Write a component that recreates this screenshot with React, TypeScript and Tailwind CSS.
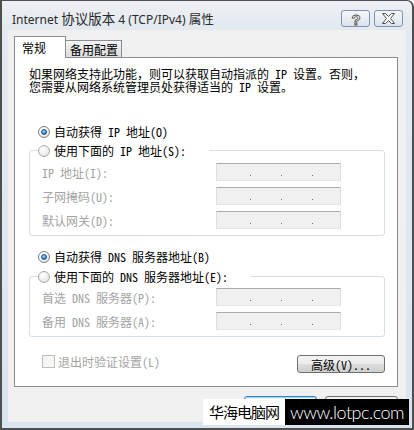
import React from "react";

function Radio({ checked }: { checked?: boolean }) {
  return (
    <span
      className={
        "flex h-[12px] w-[12px] shrink-0 items-center justify-center rounded-full border " +
        (checked
          ? "border-[#7f7f7f] bg-[radial-gradient(circle_at_35%_30%,#ffffff_0%,#f2f2f2_55%,#d4d4d4_100%)]"
          : "border-[#a9a9a9] bg-[radial-gradient(circle_at_35%_30%,#ffffff_0%,#eeeeee_55%,#d9d9d9_100%)]")
      }
    >
      {checked && (
        <span className="h-[6px] w-[6px] rounded-full border border-[#1d5595] bg-[radial-gradient(circle_at_40%_35%,#b4e2fa_0%,#4a9ce0_45%,#1b60ab_100%)]" />
      )}
    </span>
  );
}

function IpBox() {
  return (
    <div className="flex h-[18px] w-[125px] items-end gap-[30px] border border-b-[#e3e7ec] border-l-[#dadee4] border-r-[#dadee4] border-t-[#a7a9ad] bg-[#f0f0f0] pb-[4px] pl-[33px]">
      <span className="h-px w-px bg-[#6a6a6a]" />
      <span className="h-px w-px bg-[#6a6a6a]" />
      <span className="h-px w-px bg-[#6a6a6a]" />
    </div>
  );
}

function Row({ label }: { label: string }) {
  return (
    <div className="flex h-[18px] items-center">
      <div className="w-[174px] whitespace-pre text-[#a3a3a3]">{label}</div>
      <IpBox />
    </div>
  );
}

function Group({
  legend,
  legendWidth,
  rows,
  pt,
}: {
  legend: string;
  legendWidth: string;
  rows: string[];
  pt: string;
}) {
  return (
    <fieldset className="rounded-[3px] border border-[#d5dfe5] p-0">
      <legend className={"ml-[8px] flex h-[13px] items-center gap-[4px] " + legendWidth}>
        <Radio />
        <span className="whitespace-pre">{legend}</span>
      </legend>
      <div className={"flex flex-col gap-[6px] pb-[6px] pl-[12px] " + pt}>
        {rows.map((r) => (
          <Row key={r} label={r} />
        ))}
      </div>
    </fieldset>
  );
}

function TitleButton({ children }: { children: React.ReactNode }) {
  return (
    <div className="flex h-[17px] w-[29px] items-center justify-center rounded-[3px] border border-[#8193ab] bg-[linear-gradient(180deg,#f5f7fa_0%,#e9edf3_50%,#dde3ec_100%)]">
      {children}
    </div>
  );
}

export default function App() {
  return (
    <div className="relative h-[430px] w-[414px] overflow-hidden bg-white">
      <div className="flex h-[430px] w-[414px] flex-col rounded-tr-[7px] border-b-2 border-l-2 border-r-2 border-t border-[#4f4f4f] bg-[linear-gradient(180deg,#edf0f4_0px,#e3e9f0_30px,#d9e4f1_100%)]">
        {/* title bar */}
        <div className="flex h-[29px] shrink-0 items-start pl-[10px] pr-[9px]">
          <div className="mt-[10px] whitespace-pre font-['Noto_Sans','Noto_Sans_CJK_SC',sans-serif] text-[12px] leading-[16px] text-[#2a2a2a]">
            Internet <span className="text-[13.5px]">协议版本</span> 4 (TCP/IPv4) <span className="text-[12.5px]">属性</span>
          </div>
          <div className="ml-auto mt-[9px] flex gap-[4px]">
            <TitleButton>
              <svg width="14" height="14" viewBox="0 0 14 14">
                <text
                  x="7"
                  y="12.5"
                  textAnchor="middle"
                  fontSize="15"
                  fontWeight="700"
                  fontFamily="Liberation Sans, sans-serif"
                  fill="#ffffff"
                  stroke="#4a4a4a"
                  strokeWidth="0.8"
                >
                  ?
                </text>
              </svg>
            </TitleButton>
            <TitleButton>
              <svg width="15" height="11" viewBox="0 0 15 11">
                <polygon
                  points="1.5,0.5 4.5,0.5 7.5,3.5 10.5,0.5 13.5,0.5 9.5,5.5 13.5,10.5 10.5,10.5 7.5,7.5 4.5,10.5 1.5,10.5 5.5,5.5"
                  fill="#ffffff"
                  stroke="#4a4a4a"
                  strokeWidth="1"
                  strokeLinejoin="round"
                />
              </svg>
            </TitleButton>
          </div>
        </div>

        {/* client area */}
        <div className="mb-[6px] ml-[6px] mr-[6px] flex flex-1 flex-col bg-[#f0f0f0] pl-[6px] pr-[8px] pt-[6px] font-['Noto_Sans_Mono_CJK_SC','Noto_Sans_CJK_SC',sans-serif] text-[12px] leading-[13px] text-black">
          {/* tabs */}
          <div className="flex items-end">
            <div className="relative z-10 -mb-px flex h-[22px] w-[52px] items-center border border-b-0 border-[#898c95] bg-white pl-[7px]">
              常规
            </div>
            <div className="-ml-px flex h-[17px] w-[57px] items-center border border-b-0 border-[#898c95] bg-[linear-gradient(180deg,#f4f4f4_0%,#e8e8e8_50%,#dcdcdc_100%)] pl-[4px]">
              备用配置
            </div>
          </div>

          {/* panel */}
          <div className="flex flex-col border border-[#898c95] bg-white pb-[13px] pl-[14px] pr-[12px] pt-[9px]">
            <p className="whitespace-pre">
              {"如果网络支持此功能，则可以获取自动指派的 IP 设置。否则，\n您需要从网络系统管理员处获得适当的 IP 设置。"}
            </p>

            <div className="mt-[32px] flex h-[13px] items-center gap-[4px] pl-[9px]">
              <Radio checked />
              <span className="whitespace-pre">自动获得 IP 地址(O)</span>
            </div>

            <div className="mt-[6px]">
              <Group
                legend="使用下面的 IP 地址(S):"
                legendWidth="w-[171px]"
                pt="pt-[6px]"
                rows={["IP 地址(I):", "子网掩码(U):", "默认网关(D):"]}
              />
            </div>

            <div className="mt-[14px] flex h-[13px] items-center gap-[4px] pl-[9px]">
              <Radio checked />
              <span className="whitespace-pre">自动获得 DNS 服务器地址(B)</span>
            </div>

            <div className="mt-[7px]">
              <Group
                legend="使用下面的 DNS 服务器地址(E):"
                legendWidth="w-[212px]"
                pt="pt-[5px]"
                rows={["首选 DNS 服务器(P):", "备用 DNS 服务器(A):"]}
              />
            </div>

            <div className="mt-[18px] flex items-start justify-between">
              <div className="flex h-[13px] items-center gap-[3px] pl-[13px]">
                <span className="h-[13px] w-[13px] border border-[#bcbcbc] bg-[linear-gradient(135deg,#f0f0f0,#fbfbfb)]" />
                <span className="whitespace-pre text-[#a3a3a3]">退出时验证设置(L)</span>
              </div>
              <div className="flex h-[18px] w-[88px] items-center justify-center rounded-[3px] border border-[#707070] bg-[linear-gradient(180deg,#f3f3f3_0%,#ebebeb_50%,#dddddd_50%,#cfcfcf_100%)]">
                高级(V)...
              </div>
            </div>
          </div>

          {/* dialog buttons (labels hidden behind the watermark in the reference) */}
          <div className="mt-[9px] flex justify-end gap-[8px]">
            <div className="h-[23px] w-[73px] rounded-[3px] border border-[#3c7fb1] bg-[linear-gradient(180deg,#eaf6fd_0%,#d9f0fc_50%,#bee6fd_50%,#a7d9f5_100%)] shadow-[inset_0_0_0_1px_#94dcff]" />
            <div className="h-[23px] w-[73px] rounded-[3px] border border-[#707070] bg-[linear-gradient(180deg,#f3f3f3_0%,#ebebeb_50%,#dddddd_50%,#cfcfcf_100%)]" />
          </div>
        </div>
      </div>

      {/* watermark overlay */}
      <div className="absolute left-[203px] top-[399px] flex h-[26px]">
        <div className="flex w-[82px] items-center justify-center bg-white font-['Noto_Sans_CJK_SC',sans-serif] text-[15px] tracking-[-1px] text-black">
          华海电脑网
        </div>
        <div className="flex w-[124px] items-center justify-center bg-black font-['Lato','Noto_Sans',sans-serif] text-[18px] font-light tracking-[-0.5px] text-white">
          www.lotpc.com
        </div>
      </div>
    </div>
  );
}
